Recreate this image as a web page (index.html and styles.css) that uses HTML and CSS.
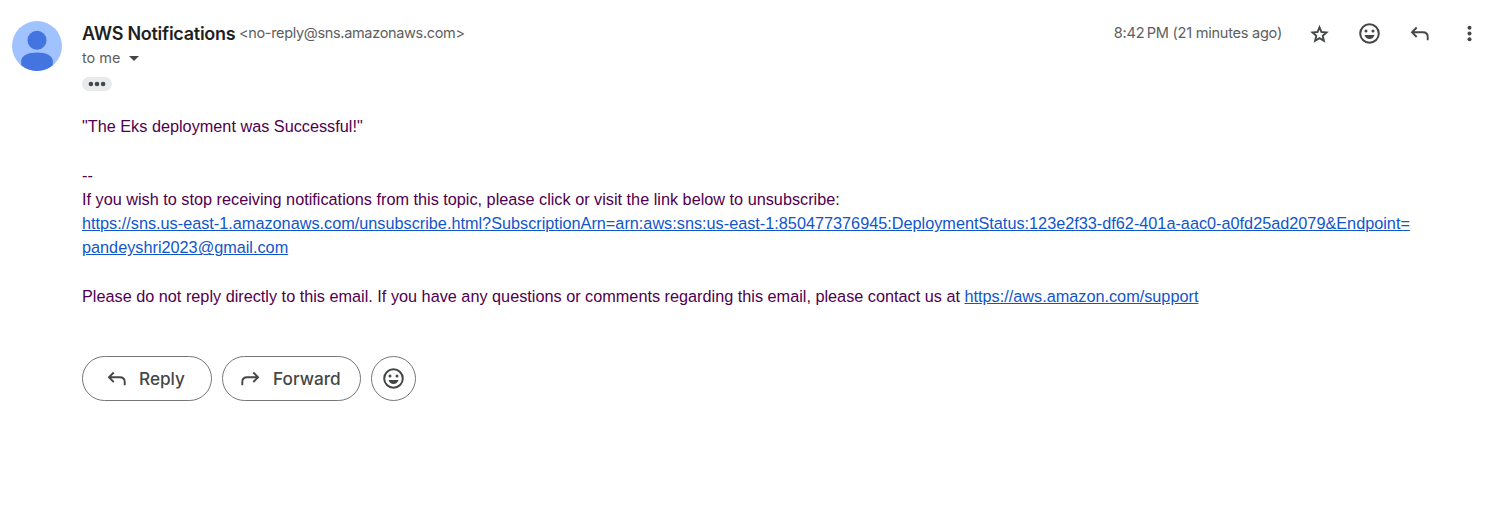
FILE: index.html
```html
<!DOCTYPE html>
<html lang="en">
<head>
<meta charset="utf-8">
<title>AWS Notifications</title>
<link rel="stylesheet" href="styles.css">
</head>
<body>
<svg class="defs" aria-hidden="true">
  <symbol id="smile" viewBox="0 0 21 21"><circle cx="10.500" cy="10.500" r="9.300" fill="none" stroke="currentColor" stroke-width="2"/><circle cx="7" cy="7.900" r="1.500"/><circle cx="14" cy="7.900" r="1.500"/><path d="M5.500 11.900h10c-.8 2.500-2.600 4-5 4s-4.200-1.500-5-4z"/></symbol>
  <symbol id="reply" viewBox="0 0 20 16"><path d="M6.700 1.500 2 6.300l4.700 4.700M2.200 6.300h10.600c3.200 0 4.900 1.700 4.900 4.600v3.300" fill="none" stroke="currentColor" stroke-width="1.900"/></symbol>
</svg>
<article class="message">
  <svg class="avatar" viewBox="0 0 50 50"><circle cx="25" cy="25" r="25" fill="#a0c3ff"/><circle cx="25" cy="19.300" r="9.500" fill="#4374e0"/><path d="M9.200 44.300V40c0-5.300 6.700-8.500 15.800-8.500S40.800 34.700 40.800 40v4.300A25 25 0 0 1 9.200 44.300z" fill="#4374e0"/></svg>
  <div class="content">
    <header class="header">
      <div class="sender"><span class="name">AWS Notifications</span><span class="address">&lt;no-reply@sns.amazonaws.com&gt;</span></div>
      <div class="tools">
        <span class="time">8:42&#8239;PM (21 minutes ago)</span>
        <svg class="star" viewBox="0 0 21 21"><path d="M10.500 4.300 12.500 9l5 .4-3.800 3.400 1.200 5-4.400-2.700-4.400 2.700 1.200-5-3.800-3.400 5-.4z" fill="none" stroke="currentColor" stroke-width="1.900"/></svg>
        <svg class="smile"><use href="#smile"/></svg>
        <svg class="reply"><use href="#reply"/></svg>
        <svg class="more" viewBox="0 0 7 17"><circle cx="3.500" cy="2.700" r="2"/><circle cx="3.500" cy="8.500" r="2"/><circle cx="3.500" cy="14.300" r="2"/></svg>
      </div>
    </header>
    <div class="recipient"><span>to me</span><svg class="caret" viewBox="0 0 10 5"><path d="M0 0h10L5 5z"/></svg></div>
    <div class="trimmed"><svg class="dots" viewBox="0 0 18 6"><circle cx="2.900" cy="3" r="2.300"/><circle cx="9" cy="3" r="2.300"/><circle cx="15.100" cy="3" r="2.300"/></svg></div>
    <div class="body">
      "The Eks deployment was Successful!"<br><br>
      --<br>
      If you wish to stop receiving notifications from this topic, please click or visit the link below to unsubscribe:<br>
      <a href="#">https://sns.us-east-1.amazonaws.com/unsubscribe.html?SubscriptionArn=arn:aws:sns:us-east-1:850477376945:DeploymentStatus:123e2f33-df62-401a-aac0-a0fd25ad2079&amp;Endpoint=<br>pandeyshri2023@gmail.com</a><br><br>
      Please do not reply directly to this email. If you have any questions or comments regarding this email, please contact us at <a href="#">https://aws.amazon.com/support</a>
    </div>
    <div class="actions">
      <button class="button button-reply"><svg class="reply"><use href="#reply"/></svg><span class="label">Reply</span></button>
      <button class="button button-forward"><svg class="reply forward"><use href="#reply"/></svg><span class="label">Forward</span></button>
      <button class="button button-react" aria-label="React"><svg class="smile"><use href="#smile"/></svg></button>
    </div>
  </div>
</article>
</body>
</html>
```
FILE: styles.css
```css
* { box-sizing: border-box; }
body { margin: 0; background: #fff; color: #5e5e5e; font-family: Inter, Roboto, sans-serif; }
svg { display: block; flex: none; fill: currentColor; }
.defs { position: absolute; width: 0; height: 0; }
.message { display: flex; gap: 20px; padding: 21px 19px 0 12px; }
.avatar { width: 50px; height: 50px; }
.content { flex: 1; min-width: 0; }
.header { display: flex; justify-content: space-between; height: 25px; white-space: nowrap; }
.sender { display: flex; align-items: center; gap: 3.5px; padding-bottom: 1px; }
.name { color: #1f1f1f; font-size: 18px; font-weight: 600; letter-spacing: -0.26px; }
.address { font-size: 14.5px; letter-spacing: -0.33px; padding-bottom: 1px; }
.tools { display: flex; align-items: center; color: #444746; }
.time { color: #5e5e5e; font-size: 14.6px; letter-spacing: -0.27px; margin-right: 27px; padding-bottom: 2px; }
.star { width: 21px; height: 21px; margin-right: 29px; }
.smile { width: 21px; height: 21px; }
.reply { width: 20px; height: 16px; }
.tools .smile { margin-right: 30px; }
.tools .reply { margin-right: 36px; }
.more { width: 7px; height: 17px; }
.recipient { display: flex; align-items: center; gap: 8px; height: 24px; font-size: 14.5px; }
.recipient span { padding-bottom: 2px; }
.caret { width: 10px; height: 5px; color: #444746; }
.trimmed { display: flex; align-items: center; justify-content: center; width: 30px; height: 14px; margin-top: 7px; border-radius: 7px; background: #e8eaed; color: #444746; }
.dots { width: 18px; height: 6px; }
.body { margin-top: 23px; color: #500050; font: 16.25px/24.3px "Liberation Sans", Arial, sans-serif; white-space: nowrap; }
.body a { color: #1155cc; }
.actions { display: flex; gap: 10px; margin-top: 48px; }
.button { display: flex; align-items: center; height: 45px; padding: 0; border: 1px solid #747775; border-radius: 23px; background: #fff; color: #444746; font: 500 17.2px Inter, Roboto, sans-serif; }
.label { padding-bottom: 1px; }
.button-reply { width: 130px; padding-left: 24px; gap: 12px; }
.button-forward { width: 139px; padding-left: 17px; gap: 13px; }
.button-react { width: 45px; justify-content: center; }
.forward { transform: scaleX(-1); }
```
